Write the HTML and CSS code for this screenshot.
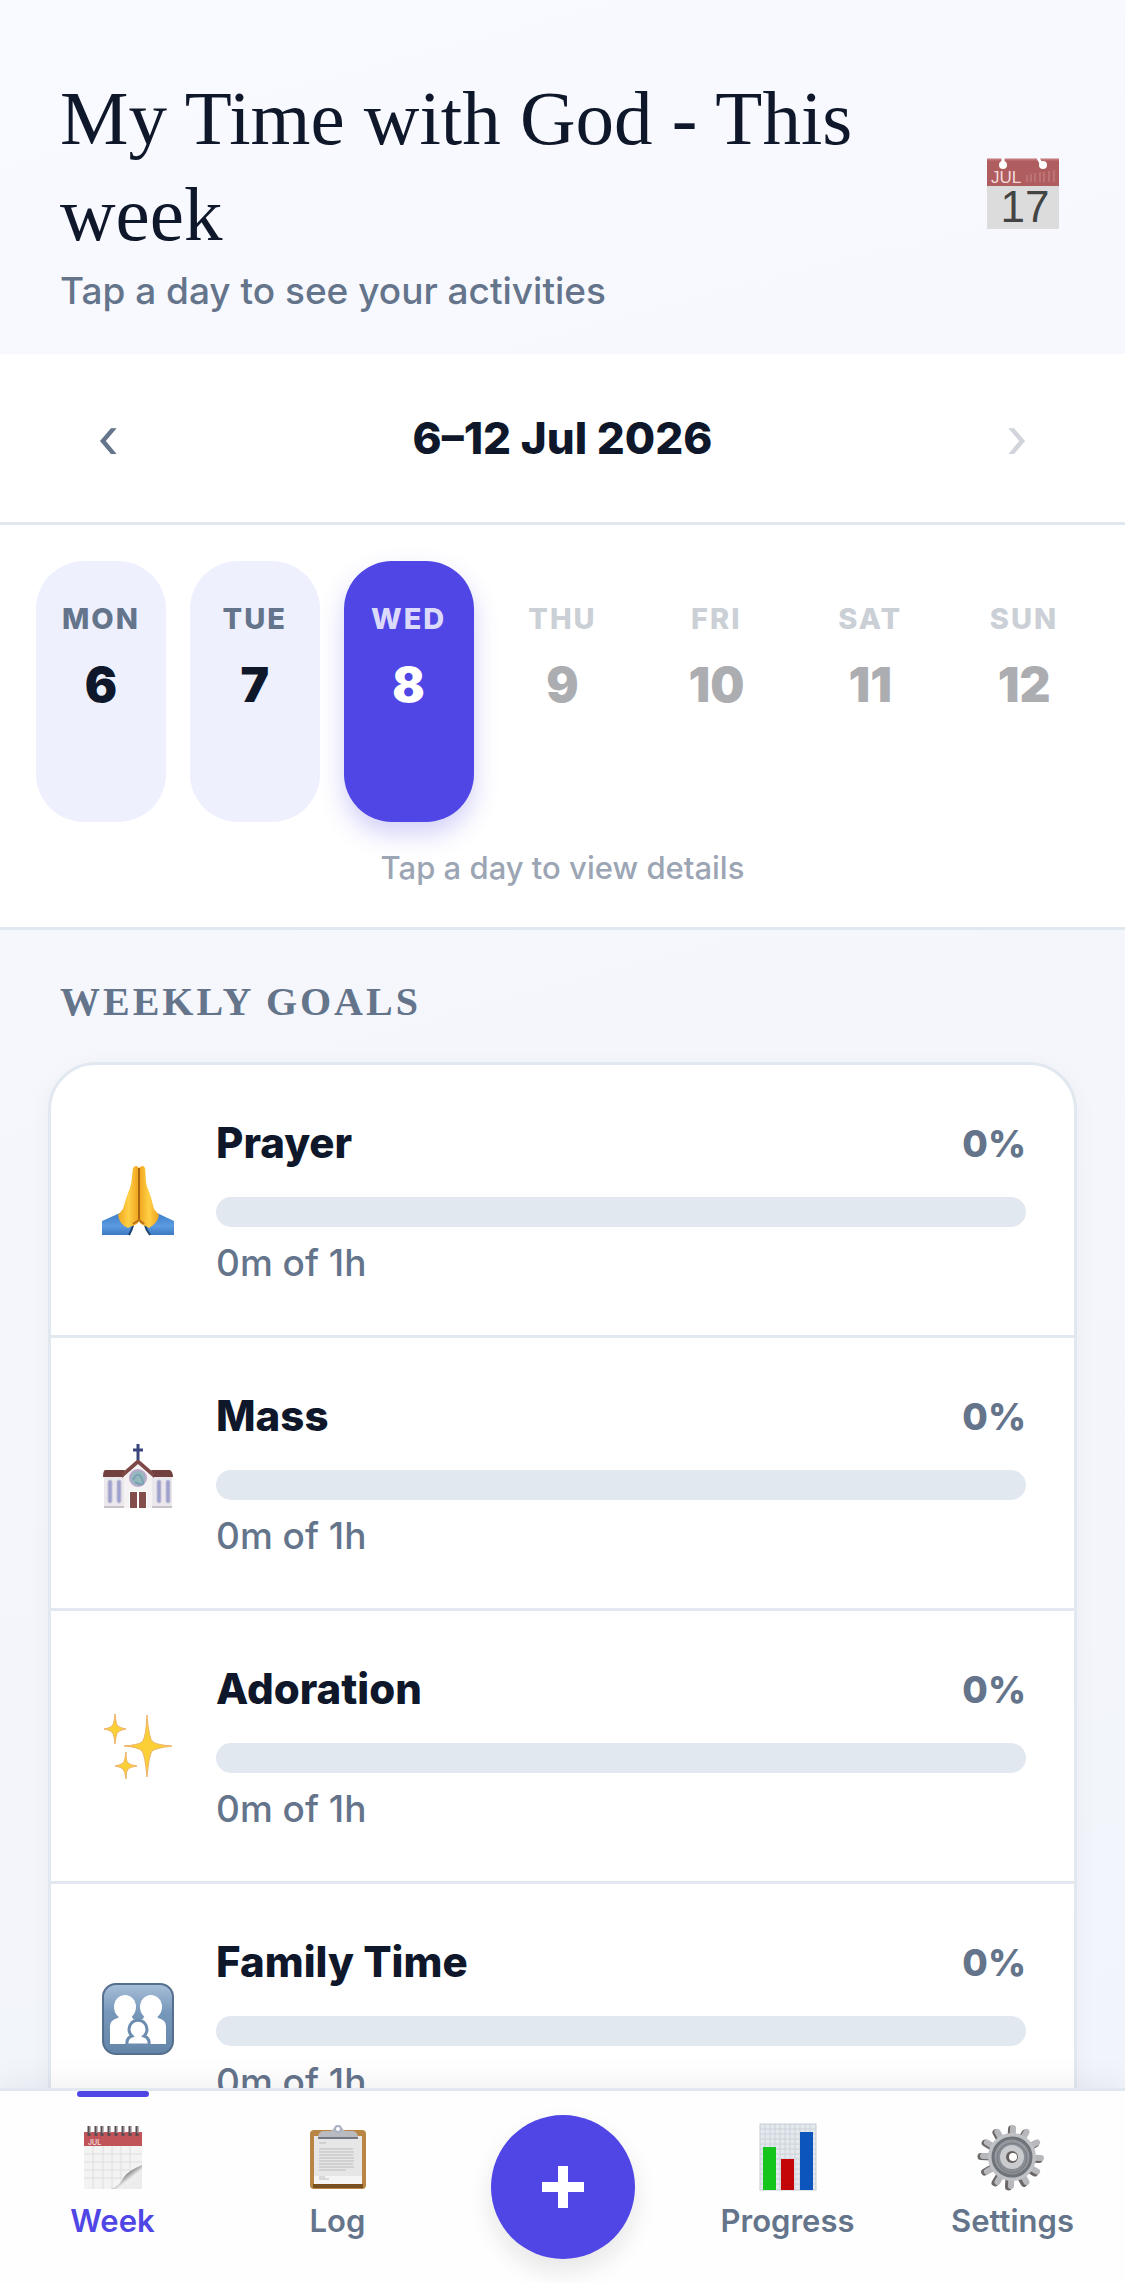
FILE: index.html
```html
<!DOCTYPE html>
<html lang="en">
<head>
    <meta charset="UTF-8">
    <meta name="viewport" content="width=device-width, initial-scale=1.0">
    <title>My Time with God</title>
    <link rel="stylesheet" href="styles.css">
</head>
<body>
    <div class="app">
        <main class="screen">
            <header class="page-header">
                <div class="page-heading">
                    <h1>My Time with God - This week</h1>
                    <p class="subtitle">Tap a day to see your activities</p>
                </div>
                <button class="calendar-button" aria-label="Pick a date">
                    <svg viewBox="0 0 72 72">
                        <rect x="0" y="1" width="72" height="70" fill="#dcdcdc"/>
                        <rect x="0" y="1" width="72" height="27" fill="#b05d5f"/>
                        <path d="M0 1.5h72" stroke="#c27778" stroke-width="2"/>
                        <path d="M40 24v-7M44 24v-8M48 24v-9M53 24v-10M57 24v-10M62 24v-11M67 24v-12" stroke="#c98a8b" stroke-width="1"/>
                        <path d="M16 0v7M51 0l4 7" stroke="#fff" stroke-width="3"/>
                        <circle cx="16" cy="7" r="4" fill="#fff"/>
                        <circle cx="56" cy="7" r="4" fill="#fff"/>
                        <text x="4" y="25" class="icon-month">JUL</text>
                        <text x="38" y="64" class="icon-date">17</text>
                    </svg>
                </button>
            </header>

            <section class="week">
                <div class="week-nav">
                    <button class="arrow" aria-label="Previous week">‹</button>
                    <h2 class="week-range">6–12 Jul 2026</h2>
                    <button class="arrow" aria-label="Next week" disabled>›</button>
                </div>
                <div class="days">
                    <button class="day"><span class="day-name">MON</span><span class="day-number">6</span></button>
                    <button class="day"><span class="day-name">TUE</span><span class="day-number">7</span></button>
                    <button class="day selected"><span class="day-name">WED</span><span class="day-number">8</span></button>
                    <button class="day" disabled><span class="day-name">THU</span><span class="day-number">9</span></button>
                    <button class="day" disabled><span class="day-name">FRI</span><span class="day-number">10</span></button>
                    <button class="day" disabled><span class="day-name">SAT</span><span class="day-number">11</span></button>
                    <button class="day" disabled><span class="day-name">SUN</span><span class="day-number">12</span></button>
                </div>
                <p class="hint">Tap a day to view details</p>
            </section>

            <section class="goals">
                <h2 class="section-title">WEEKLY GOALS</h2>
                <div class="goal-card">
                    <div class="goal">
                        <svg class="goal-icon" viewBox="0 0 72 72">
                            <defs>
                                <linearGradient id="sleeve" x1="0" y1="0" x2="0" y2="1"><stop offset="0" stop-color="#3d7fca"/><stop offset=".6" stop-color="#5c9ae0"/><stop offset="1" stop-color="#3a78c0"/></linearGradient>
                                <linearGradient id="hand" x1="0" y1="0" x2="1" y2="0"><stop offset="0" stop-color="#f0a51e"/><stop offset=".5" stop-color="#ffd046"/><stop offset="1" stop-color="#efa31c"/></linearGradient>
                            </defs>
                            <path d="M0 57l18-8 14 12-4 10H0z" fill="url(#sleeve)"/>
                            <path d="M72 57l-17-8-13 12 6 10h24z" fill="url(#sleeve)"/>
                            <path d="M31 61q-1 5-4 10M43 61q1 5 5 10" stroke="#1d4370" stroke-width="2" fill="none"/>
                            <path d="M37 56V4q-3-4-6 0c-1 6-1 14-3 20-3 7-5 14-7 21l-5 6q1 9 10 13c5-3 11-3 11-8z" fill="url(#hand)"/>
                            <path d="M37 56V4q4-4 6 0c1 6 0 15 3 21 3 7 4 13 6 20l5 6q-1 8-10 13c-4-3-10-3-10-8z" fill="url(#hand)"/>
                            <path d="M37 4v53" stroke="#a96510" stroke-width="2"/>
                            <path d="M31 60l6-4 5 4" stroke="#b9711a" stroke-width="2" fill="none"/>
                        </svg>
                        <div class="goal-body">
                            <div class="goal-top"><h3>Prayer</h3><span class="percent">0%</span></div>
                            <div class="bar" role="progressbar" aria-label="Prayer" aria-valuenow="0" aria-valuemin="0" aria-valuemax="100"><div class="bar-fill" style="width: 0%"></div></div>
                            <p class="amount">0m of 1h</p>
                        </div>
                    </div>

                    <div class="goal">
                        <svg class="goal-icon" viewBox="0 -13 72 72">
                            <path d="M2 25h68v32H2z" fill="#ebe8ed"/>
                            <path d="M22 26L36 11l14 15v32H22z" fill="#f5f2f4"/>
                            <path d="M3 20h20l-3 7H1q0-6 2-7zM49 20h19q3 2 3 7H52z" fill="#71403f"/>
                            <path d="M20 23L36 9l16 14v5L36 14 20 28z" fill="#7d4845"/>
                            <path d="M36-6v16M31 0h10" stroke="#3a467c" stroke-width="3"/>
                            <circle cx="36" cy="28" r="8" fill="#93b9bd" stroke="#b9a8cb" stroke-width="2"/>
                            <path d="M31 30q5-10 9-1t-7 3" stroke="#7da0b4" stroke-width="2" fill="none"/>
                            <path d="M27 41h18v17H27z" fill="#fff"/>
                            <path d="M28 42h7v16h-7zM37 42h7v16h-7z" fill="#834d49"/>
                            <g fill="#9da1cd" stroke="#c5c0d5">
                                <rect x="6" y="30" width="4" height="23" rx="2"/><rect x="15" y="30" width="4" height="23" rx="2"/>
                                <rect x="55" y="30" width="4" height="23" rx="2"/><rect x="64" y="30" width="4" height="23" rx="2"/>
                            </g>
                            <path d="M2 57h20M50 57h20" stroke="#c9c2c7" stroke-width="2"/>
                        </svg>
                        <div class="goal-body">
                            <div class="goal-top"><h3>Mass</h3><span class="percent">0%</span></div>
                            <div class="bar" role="progressbar" aria-label="Mass" aria-valuenow="0" aria-valuemin="0" aria-valuemax="100"><div class="bar-fill" style="width: 0%"></div></div>
                            <p class="amount">0m of 1h</p>
                        </div>
                    </div>

                    <div class="goal">
                        <svg class="goal-icon" viewBox="0 0 72 72">
                            <g fill="#fbd037" stroke="#eeb264" stroke-width="1">
                                <path d="M45 5q2 25 6 27 4 3 19 4-16 2-20 5-3 4-5 26-2-22-5-26-4-4-18-5 14-1 18-4 4-4 5-27z"/>
                                <path d="M13 4q1 11 3 12 2 2 8 3-6 1-8 3-2 2-3 12-1-10-3-12-2-2-8-3 6-1 8-3 2-2 3-12z"/>
                                <path d="M24 42q0 9 2 11 2 2 9 3-7 1-9 3-2 2-2 10-1-8-3-10-2-2-8-3 6-1 8-3 2-2 3-11z"/>
                            </g>
                        </svg>
                        <div class="goal-body">
                            <div class="goal-top"><h3>Adoration</h3><span class="percent">0%</span></div>
                            <div class="bar" role="progressbar" aria-label="Adoration" aria-valuenow="0" aria-valuemin="0" aria-valuemax="100"><div class="bar-fill" style="width: 0%"></div></div>
                            <p class="amount">0m of 1h</p>
                        </div>
                    </div>

                    <div class="goal">
                        <svg class="goal-icon" viewBox="0 0 72 72">
                            <defs>
                                <linearGradient id="family" x1="0" y1="0" x2="0" y2="1"><stop offset="0" stop-color="#a8bfd8"/><stop offset=".4" stop-color="#7898bb"/><stop offset="1" stop-color="#6485a8"/></linearGradient>
                            </defs>
                            <rect x="1" y="1" width="70" height="70" rx="13" fill="url(#family)" stroke="#55708e" stroke-width="2"/>
                            <g fill="#fff">
                                <ellipse cx="23" cy="24" rx="11" ry="12"/>
                                <ellipse cx="49" cy="24" rx="11" ry="12"/>
                                <path d="M8 61V43q0-6 8-8l2-4h11l2 5 5 1 5-1 2-5h11l2 4q8 2 8 8v18z"/>
                            </g>
                            <path d="M25 62q-1-7 5-9a9 9 0 1 1 12 0q6 2 5 9z" fill="#fff" stroke="#6c8caf" stroke-width="3"/>
                        </svg>
                        <div class="goal-body">
                            <div class="goal-top"><h3>Family Time</h3><span class="percent">0%</span></div>
                            <div class="bar" role="progressbar" aria-label="Family Time" aria-valuenow="0" aria-valuemin="0" aria-valuemax="100"><div class="bar-fill" style="width: 0%"></div></div>
                            <p class="amount">0m of 1h</p>
                        </div>
                    </div>
                </div>
            </section>
        </main>

        <nav class="tabs">
            <a class="tab active" href="#week">
                <svg viewBox="0 0 66 66">
                    <defs>
                        <linearGradient id="curl" x1="0" y1="0" x2="1" y2="1"><stop offset=".3" stop-color="#333"/><stop offset=".6" stop-color="#eee"/></linearGradient>
                    </defs>
                    <rect x="4" y="8" width="58" height="57" fill="#f3f3f3"/>
                    <path d="M4 30h58M4 38h58M4 46h58M4 54h58M13 22v43M23 22v43M32 22v43M41 22v43M50 22v43" stroke="#dedede"/>
                    <rect x="4" y="8" width="58" height="14" fill="#c15458"/>
                    <text x="8" y="21" class="icon-small">JUL</text>
                    <path d="M31 65q8-2 13-12 4-6 18-12v24z" fill="url(#curl)"/>
                    <path d="M40 65q15-7 22-18v18z" fill="#ececec"/>
                    <path d="M9 2v10M16 2v10M22 2v10M29 2v10M36 2v10M43 2v10M50 2v10M57 2v10" stroke="#5a4c50" stroke-width="3"/>
                    <path d="M10 2v7M17 2v7M23 2v7M30 2v7M37 2v7M44 2v7M51 2v7M58 2v7" stroke="#c9c9c9"/>
                </svg>
                <span>Week</span>
            </a>
            <a class="tab" href="#log">
                <svg viewBox="0 0 66 66">
                    <rect x="5" y="6" width="56" height="59" rx="4" fill="#b98545"/>
                    <path d="M8 60h50v4H8z" fill="#79501f"/>
                    <path d="M9 12h48v48H9z" fill="#e6e6e6"/>
                    <path d="M9 52h48v8H9z" fill="#f5f5f5"/>
                    <path d="M14 19h7M14 25h34M14 28h35M14 31h34M14 34h35M14 37h35M14 40h34M14 43h35M14 46h27M14 53h6M14 55h10" stroke="#bbb"/>
                    <path d="M13 14q0-6 5-7h8l3-3q4-4 8 0l3 3h8q5 1 5 7z" fill="#b9bbc1"/>
                    <path d="M13 14h40" stroke="#767983" stroke-width="2"/>
                    <circle cx="33" cy="5" r="3" fill="#fff" stroke="#a9b2c2" stroke-width="2"/>
                </svg>
                <span>Log</span>
            </a>
            <button class="add-button" aria-label="Add activity">
                <svg viewBox="0 0 42 42"><path d="M21 0v42M0 21h42" stroke="#fff" stroke-width="10"/></svg>
            </button>
            <a class="tab" href="#progress">
                <svg viewBox="0 0 66 66">
                    <rect x="5" y="0" width="56" height="66" fill="#e4e9ee"/>
                    <path d="M5 5h56M5 10h56M5 15h56M5 20h56M5 25h56M5 30h56M5 35h56M5 40h56M5 45h56M5 50h56M5 55h56M5 60h56M10 0v66M15 0v66M20 0v66M25 0v66M30 0v66M35 0v66M40 0v66M45 0v66M50 0v66M55 0v66" stroke="#cbd2da"/>
                    <rect x="5" y="0" width="56" height="66" fill="none" stroke="#c2cbd3"/>
                    <rect x="8" y="23" width="13" height="43" fill="#15c51b"/>
                    <rect x="26" y="35" width="13" height="31" fill="#c30708"/>
                    <rect x="45" y="8" width="13" height="58" fill="#0b55bd"/>
                </svg>
                <span>Progress</span>
            </a>
            <a class="tab" href="#settings">
                <svg viewBox="0 0 66 66">
                    <g stroke="#6c6867" stroke-width="7" stroke-linecap="round">
                        <path d="M31 5v58M2 34h58" transform="rotate(3 31 34)"/>
                        <path d="M31 5v58M2 34h58" transform="rotate(31 31 34)"/>
                        <path d="M31 5v58M2 34h58" transform="rotate(61 31 34)"/>
                    </g>
                    <g stroke="#b7b8bc" stroke-width="6" stroke-linecap="round">
                        <path d="M33 4v58M4 33h58" transform="rotate(2 33 33)"/>
                        <path d="M33 4v58M4 33h58" transform="rotate(30 33 33)"/>
                        <path d="M33 4v58M4 33h58" transform="rotate(60 33 33)"/>
                    </g>
                    <circle cx="33" cy="33" r="24" fill="#bfc1c4"/>
                    <circle cx="33" cy="33" r="19" fill="#94989e" stroke="#6f747a" stroke-width="3"/>
                    <circle cx="33" cy="34" r="15" fill="#898e94" stroke="#777c82" stroke-width="1"/>
                    <circle cx="33" cy="33" r="12" fill="#c9cbce"/>
                    <circle cx="33" cy="33" r="6" fill="#66615f"/>
                    <circle cx="34" cy="33" r="4" fill="#fff"/>
                </svg>
                <span>Settings</span>
            </a>
        </nav>
    </div>
</body>
</html>
```

FILE: styles.css
```css
* {
    box-sizing: border-box;
}
body {
    margin: 0;
    font-family: Inter, "Liberation Sans", sans-serif;
    color: #0f172a;
    background: #f8f9ff;
}
h1, h2, h3, p {
    margin: 0;
}
button {
    padding: 0;
    border: none;
    background: none;
    font-family: inherit;
    color: inherit;
    cursor: pointer;
}
svg {
    display: block;
    overflow: visible;
}
.app {
    display: flex;
    flex-direction: column;
    height: 100vh;
    background: linear-gradient(165deg, #f9faff 0%, #f4f6fb 50%, #f2f4fc 100%);
}
.screen {
    flex: 1;
    min-height: 0;
    overflow-y: auto;
    scrollbar-width: none;
}

/* header */
.page-header {
    display: flex;
    align-items: center;
    justify-content: space-between;
    gap: 48px;
    padding: 70px 60px 36px;
}
h1 {
    font-family: "Liberation Serif", serif;
    font-size: 77px;
    font-weight: 400;
    line-height: 96px;
}
.subtitle {
    margin-top: 2px;
    font-size: 37px;
    font-weight: 500;
    line-height: 54px;
    color: #64748b;
}
.calendar-button {
    flex: none;
    padding: 6px;
}
.calendar-button svg {
    width: 72px;
    height: 72px;
}
.icon-month {
    font-family: "Liberation Sans", sans-serif;
    font-size: 17px;
    fill: #f3dcdc;
}
.icon-date {
    font-family: "Liberation Sans", sans-serif;
    font-size: 44px;
    text-anchor: middle;
    fill: #444;
}
.icon-small {
    font-size: 7px;
    fill: #f3dcdc;
}

/* week picker */
.week {
    background: #fff;
    border-bottom: 3px solid #e2e8f0;
}
.week-nav {
    display: flex;
    align-items: center;
    justify-content: space-between;
    padding: 24px 48px;
    border-bottom: 3px solid #e2e8f0;
}
.arrow {
    width: 120px;
    height: 120px;
    font-size: 56px;
    line-height: 60px;
    color: #64748b;
}
.arrow:disabled {
    color: #d1d5db;
}
.week-range {
    font-size: 44px;
    font-weight: 800;
    line-height: 60px;
}
.days {
    display: grid;
    grid-template-columns: repeat(7, 1fr);
    gap: 24px;
    padding: 36px 36px 24px;
}
.day {
    display: flex;
    flex-direction: column;
    align-items: center;
    gap: 14px;
    height: 261px;
    padding-top: 36px;
    border-radius: 48px;
    background: #eef0fe;
}
.day-name {
    font-size: 29px;
    font-weight: 800;
    line-height: 44px;
    letter-spacing: 2px;
    color: #64748b;
}
.day-number {
    font-size: 48px;
    font-weight: 900;
    line-height: 60px;
}
.day.selected {
    background: #4f46e5;
    color: #fff;
    box-shadow: 0 12px 24px rgba(79, 70, 229, 0.25);
}
.day.selected .day-name {
    color: #dcdafa;
}
.day:disabled {
    background: none;
    color: #acadb1;
}
.day:disabled .day-name {
    color: #cbcfd6;
}
.hint {
    padding-bottom: 37px;
    font-size: 31px;
    font-weight: 500;
    line-height: 44px;
    text-align: center;
    color: #9ca5b4;
}

/* goals */
.goals {
    padding: 48px 48px 60px;
}
.section-title {
    padding: 0 12px;
    margin-bottom: 36px;
    font-family: "Liberation Serif", serif;
    font-size: 40px;
    font-weight: 700;
    line-height: 48px;
    letter-spacing: 3px;
    color: #64748b;
}
.goal-card {
    background: #fff;
    border: 3px solid #e2e8f0;
    border-radius: 48px;
    box-shadow: 0 6px 24px rgba(15, 23, 42, 0.04);
}
.goal {
    display: flex;
    align-items: center;
    gap: 42px;
    padding: 48px 48px 48px 51px;
    border-bottom: 3px solid #e2e8f0;
}
.goal:last-child {
    border-bottom: none;
}
.goal-icon {
    flex: none;
    width: 72px;
    height: 72px;
}
.goal-body {
    flex: 1;
}
.goal-top {
    display: flex;
    align-items: center;
    justify-content: space-between;
    margin-bottom: 24px;
}
h3 {
    font-size: 42px;
    font-weight: 800;
    line-height: 60px;
}
.percent {
    font-size: 37px;
    font-weight: 800;
    color: #64748b;
}
.bar {
    height: 30px;
    border-radius: 15px;
    background: #e2e8f0;
    overflow: hidden;
}
.bar-fill {
    height: 100%;
    background: #4f46e5;
}
.amount {
    margin-top: 12px;
    font-size: 37px;
    font-weight: 500;
    line-height: 48px;
    color: #64748b;
}

/* bottom tabs */
.tabs {
    position: relative;
    flex: none;
    display: grid;
    grid-template-columns: repeat(5, 1fr);
    justify-items: center;
    height: 195px;
    background: #fefefe;
    border-top: 3px solid #e2e8f0;
    box-shadow: 0 -6px 30px rgba(15, 23, 42, 0.06);
}
.tab {
    position: relative;
    display: flex;
    flex-direction: column;
    align-items: center;
    gap: 11px;
    padding-top: 33px;
    font-size: 31px;
    font-weight: 600;
    line-height: 40px;
    color: #64748b;
    text-decoration: none;
}
.tab svg {
    width: 66px;
    height: 66px;
}
.tab.active {
    color: #4f46e5;
}
.tab.active::before {
    content: "";
    position: absolute;
    top: 0;
    width: 72px;
    height: 6px;
    border-radius: 3px;
    background: #4f46e5;
}
.add-button {
    display: flex;
    align-items: center;
    justify-content: center;
    width: 144px;
    height: 144px;
    margin-top: 24px;
    border-radius: 50%;
    background: #4f46e5;
    box-shadow: 0 12px 24px rgba(15, 23, 42, 0.1);
}
.add-button svg {
    width: 42px;
    height: 42px;
}
```
